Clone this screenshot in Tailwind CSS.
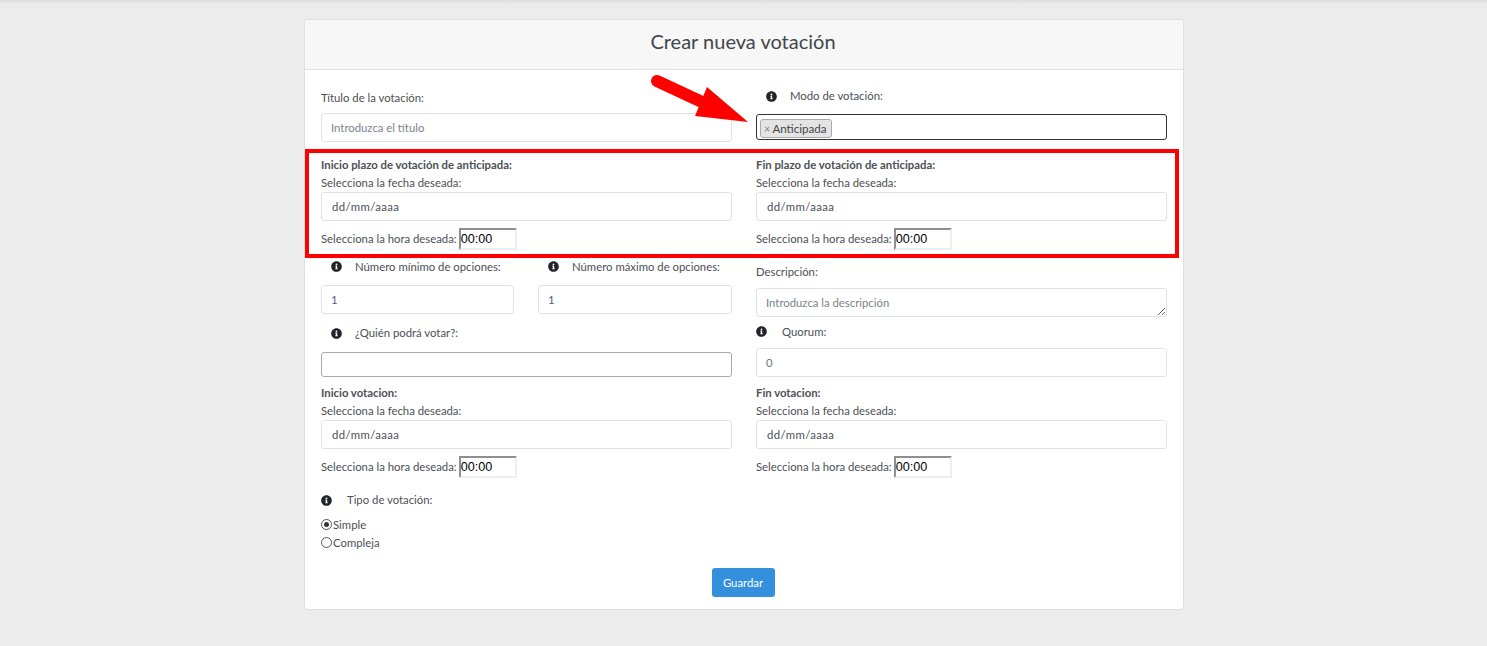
<!DOCTYPE html>
<html lang="es">
<head>
<meta charset="utf-8">
<title>Crear nueva votación</title>
<script src="https://cdn.jsdelivr.net/npm/@tailwindcss/browser@4"></script>
</head>
<body class="bg-[#ececec] font-['Lato',sans-serif] text-[11.33px] leading-[18px] text-[#4b5056] h-[646px] overflow-hidden">
<div class="h-[4px] bg-gradient-to-b from-[#dcdcdc] to-[#ececec]"></div>
<main class="relative w-[880px] ml-[304px] mt-[15px] h-[591px] bg-white border border-[#dfdfdf] rounded-[3px]">
  <header class="h-[50px] pb-[7px] pr-[2px] bg-[#f7f7f7] border-b border-[#e0e0e0] flex items-center justify-center rounded-t-[3px]">
    <h1 class="text-[20px] leading-[30px] text-[#41464b]">Crear nueva votación</h1>
  </header>

  <div class="px-4">
    <!-- row 1 -->
    <div class="grid grid-cols-2 gap-x-6 h-[78px]">
      <div class="pt-[19px]">
        <label class="block h-[24px]">Título de la votación:</label>
        <input class="block w-full h-[29px] px-[9px] border border-[#dfe3e8] rounded-[3px] placeholder:text-[#7c8389]" placeholder="Introduzca el título">
      </div>
      <div class="pt-[13px]">
        <div class="flex items-center h-[26px] pl-[10px] gap-[13px] mb-[5px]">
          <svg class="w-[11px] h-[11px] text-[#212529]" viewBox="0 0 512 512" fill="currentColor"><path d="M256 8C119.043 8 8 119.083 8 256c0 136.997 111.043 248 248 248s248-111.003 248-248C504 119.083 392.957 8 256 8zm0 110c23.196 0 42 18.804 42 42s-18.804 42-42 42-42-18.804-42-42 18.804-42 42-42zm56 254c0 6.627-5.373 12-12 12h-88c-6.627 0-12-5.373-12-12v-24c0-6.627 5.373-12 12-12h12v-64h-12c-6.627 0-12-5.373-12-12v-24c0-6.627 5.373-12 12-12h64c6.627 0 12 5.373 12 12v100h12c6.627 0 12 5.373 12 12v24z"/></svg>
          <span>Modo de votación:</span>
        </div>
        <div class="h-[26px] border border-[#333] rounded-[3px] flex items-start pl-[3px] pt-[4px]">
          <span class="h-[19px] pl-[3px] pr-[4px] flex items-center gap-[2px] bg-[#e4e4e4] border border-[#aaa] rounded-[3px] text-[#444] text-[11.6px]"><span class="text-[#888] text-[11px]">×</span>Anticipada</span>
        </div>
      </div>
    </div>

    <!-- row 2 -->
    <div class="grid grid-cols-2 gap-x-6 h-[108px]">
      <div class="pt-[8px]">
        <p class="font-bold h-[18px]">Inicio plazo de votación de anticipada:</p>
        <p class="h-[18px]">Selecciona la fecha deseada:</p>
        <input class="block w-full h-[29px] px-[10px] border border-[#dfe3e8] rounded-[3px] tracking-[0.4px]" value="dd/mm/aaaa">
        <div class="flex items-center mt-[7px] gap-[2px]">
          <span>Selecciona la hora deseada:</span>
          <input class="w-[58px] h-[22px] border-2 border-t-[#8f8f8f] border-l-[#8f8f8f] border-r-[#eee] border-b-[#eee] font-['Liberation_Sans',sans-serif] text-[12.6px] text-black" value="00:00">
        </div>
      </div>
      <div class="pt-[8px]">
        <p class="font-bold h-[18px]">Fin plazo de votación de anticipada:</p>
        <p class="h-[18px]">Selecciona la fecha deseada:</p>
        <input class="block w-full h-[29px] px-[10px] border border-[#dfe3e8] rounded-[3px] tracking-[0.4px]" value="dd/mm/aaaa">
        <div class="flex items-center mt-[7px] gap-[2px]">
          <span>Selecciona la hora deseada:</span>
          <input class="w-[58px] h-[22px] border-2 border-t-[#8f8f8f] border-l-[#8f8f8f] border-r-[#eee] border-b-[#eee] font-['Liberation_Sans',sans-serif] text-[12.6px] text-black" value="00:00">
        </div>
      </div>
    </div>

    <!-- row 3 -->
    <div class="grid grid-cols-2 gap-x-6 h-[61px]">
      <div class="grid grid-cols-[193px_194px] gap-x-6">
        <div>
          <div class="flex items-center h-[29px] pl-[10px] gap-[13px] pb-[8px]">
            <svg class="w-[11px] h-[11px] text-[#212529]" viewBox="0 0 512 512" fill="currentColor"><path d="M256 8C119.043 8 8 119.083 8 256c0 136.997 111.043 248 248 248s248-111.003 248-248C504 119.083 392.957 8 256 8zm0 110c23.196 0 42 18.804 42 42s-18.804 42-42 42-42-18.804-42-42 18.804-42 42-42zm56 254c0 6.627-5.373 12-12 12h-88c-6.627 0-12-5.373-12-12v-24c0-6.627 5.373-12 12-12h12v-64h-12c-6.627 0-12-5.373-12-12v-24c0-6.627 5.373-12 12-12h64c6.627 0 12 5.373 12 12v100h12c6.627 0 12 5.373 12 12v24z"/></svg>
            <span>Número mínimo de opciones:</span>
          </div>
          <input class="block w-full h-[29px] px-[9px] border border-[#dfe3e8] rounded-[3px] text-[#50607a]" value="1">
        </div>
        <div>
          <div class="flex items-center h-[29px] pl-[10px] gap-[13px] pb-[8px]">
            <svg class="w-[11px] h-[11px] text-[#212529]" viewBox="0 0 512 512" fill="currentColor"><path d="M256 8C119.043 8 8 119.083 8 256c0 136.997 111.043 248 248 248s248-111.003 248-248C504 119.083 392.957 8 256 8zm0 110c23.196 0 42 18.804 42 42s-18.804 42-42 42-42-18.804-42-42 18.804-42 42-42zm56 254c0 6.627-5.373 12-12 12h-88c-6.627 0-12-5.373-12-12v-24c0-6.627 5.373-12 12-12h12v-64h-12c-6.627 0-12-5.373-12-12v-24c0-6.627 5.373-12 12-12h64c6.627 0 12 5.373 12 12v100h12c6.627 0 12 5.373 12 12v24z"/></svg>
            <span>Número máximo de opciones:</span>
          </div>
          <input class="block w-full h-[29px] px-[9px] border border-[#dfe3e8] rounded-[3px] text-[#50607a]" value="1">
        </div>
      </div>
      <div class="pt-[7px]">
        <label class="block h-[25px]">Descripción:</label>
        <textarea class="block w-full h-[29px] px-[9px] py-[5px] border border-[#dfe3e8] rounded-[3px] placeholder:text-[#7c8389]" placeholder="Introduzca la descripción"></textarea>
      </div>
    </div>

    <!-- row 4 -->
    <div class="grid grid-cols-2 gap-x-6 h-[65px]">
      <div class="pt-[3px]">
        <div class="flex items-center h-[32px] pl-[10px] gap-[13px] pb-[6px]">
          <svg class="w-[11px] h-[11px] text-[#212529]" viewBox="0 0 512 512" fill="currentColor"><path d="M256 8C119.043 8 8 119.083 8 256c0 136.997 111.043 248 248 248s248-111.003 248-248C504 119.083 392.957 8 256 8zm0 110c23.196 0 42 18.804 42 42s-18.804 42-42 42-42-18.804-42-42 18.804-42 42-42zm56 254c0 6.627-5.373 12-12 12h-88c-6.627 0-12-5.373-12-12v-24c0-6.627 5.373-12 12-12h12v-64h-12c-6.627 0-12-5.373-12-12v-24c0-6.627 5.373-12 12-12h64c6.627 0 12 5.373 12 12v100h12c6.627 0 12 5.373 12 12v24z"/></svg>
          <span>¿Quién podrá votar?:</span>
        </div>
        <div class="h-[25px] border border-[#aaa] rounded-[3px]"></div>
      </div>
      <div class="pt-[4px]">
        <div class="flex items-center h-[27px] gap-[15px] pb-[6px]">
          <svg class="w-[11px] h-[11px] text-[#212529]" viewBox="0 0 512 512" fill="currentColor"><path d="M256 8C119.043 8 8 119.083 8 256c0 136.997 111.043 248 248 248s248-111.003 248-248C504 119.083 392.957 8 256 8zm0 110c23.196 0 42 18.804 42 42s-18.804 42-42 42-42-18.804-42-42 18.804-42 42-42zm56 254c0 6.627-5.373 12-12 12h-88c-6.627 0-12-5.373-12-12v-24c0-6.627 5.373-12 12-12h12v-64h-12c-6.627 0-12-5.373-12-12v-24c0-6.627 5.373-12 12-12h64c6.627 0 12 5.373 12 12v100h12c6.627 0 12 5.373 12 12v24z"/></svg>
          <span>Quorum:</span>
        </div>
        <input class="block w-full h-[29px] px-[9px] border border-[#dfe3e8] rounded-[3px] text-[#6b7177]" value="0">
      </div>
    </div>

    <!-- row 5 -->
    <div class="grid grid-cols-2 gap-x-6 h-[96px]">
      <div class="pt-[2px]">
        <p class="font-bold h-[18px]">Inicio votacion:</p>
        <p class="h-[18px]">Selecciona la fecha deseada:</p>
        <input class="block w-full h-[29px] px-[10px] border border-[#dfe3e8] rounded-[3px] tracking-[0.4px]" value="dd/mm/aaaa">
        <div class="flex items-center mt-[7px] gap-[2px]">
          <span>Selecciona la hora deseada:</span>
          <input class="w-[58px] h-[22px] border-2 border-t-[#8f8f8f] border-l-[#8f8f8f] border-r-[#eee] border-b-[#eee] font-['Liberation_Sans',sans-serif] text-[12.6px] text-black" value="00:00">
        </div>
      </div>
      <div class="pt-[2px]">
        <p class="font-bold h-[18px]">Fin votacion:</p>
        <p class="h-[18px]">Selecciona la fecha deseada:</p>
        <input class="block w-full h-[29px] px-[10px] border border-[#dfe3e8] rounded-[3px] tracking-[0.4px]" value="dd/mm/aaaa">
        <div class="flex items-center mt-[7px] gap-[2px]">
          <span>Selecciona la hora deseada:</span>
          <input class="w-[58px] h-[22px] border-2 border-t-[#8f8f8f] border-l-[#8f8f8f] border-r-[#eee] border-b-[#eee] font-['Liberation_Sans',sans-serif] text-[12.6px] text-black" value="00:00">
        </div>
      </div>
    </div>

    <!-- row 6 -->
    <div class="h-[90px] pt-[13px]">
      <div class="flex items-center h-[18px] gap-[15px]">
        <svg class="w-[11px] h-[11px] text-[#212529]" viewBox="0 0 512 512" fill="currentColor"><path d="M256 8C119.043 8 8 119.083 8 256c0 136.997 111.043 248 248 248s248-111.003 248-248C504 119.083 392.957 8 256 8zm0 110c23.196 0 42 18.804 42 42s-18.804 42-42 42-42-18.804-42-42 18.804-42 42-42zm56 254c0 6.627-5.373 12-12 12h-88c-6.627 0-12-5.373-12-12v-24c0-6.627 5.373-12 12-12h12v-64h-12c-6.627 0-12-5.373-12-12v-24c0-6.627 5.373-12 12-12h64c6.627 0 12 5.373 12 12v100h12c6.627 0 12 5.373 12 12v24z"/></svg>
        <span>Tipo de votación:</span>
      </div>
      <div class="flex items-center h-[18px] mt-[7px] gap-px">
        <span class="w-[9px] h-[9px] box-content border border-[#555] rounded-full flex items-center justify-center -mt-[2px]"><span class="w-[5px] h-[5px] rounded-full bg-[#333]"></span></span>
        <span>Simple</span>
      </div>
      <div class="flex items-center h-[18px] gap-px">
        <span class="w-[9px] h-[9px] box-content border border-[#555] rounded-full -mt-[2px]"></span>
        <span>Compleja</span>
      </div>
    </div>

    <div class="flex justify-center pr-[2px]">
      <button class="w-[63px] h-[29px] bg-[#3490dc] text-white rounded-[3px]">Guardar</button>
    </div>
  </div>

  <!-- annotations -->
  <div class="absolute left-0 top-[129px] w-[874px] h-[109px] border-[4px] border-[#ff0000]"></div>
  <svg class="absolute left-0 top-0 pointer-events-none" width="878" height="200" viewBox="305 20 878 200">
    <line x1="657" y1="81" x2="702" y2="102" stroke="#ff0000" stroke-width="12" stroke-linecap="round"/>
    <polygon points="707,87 748,122 695,116" fill="#ff0000"/>
  </svg>
</main>
</body>
</html>
